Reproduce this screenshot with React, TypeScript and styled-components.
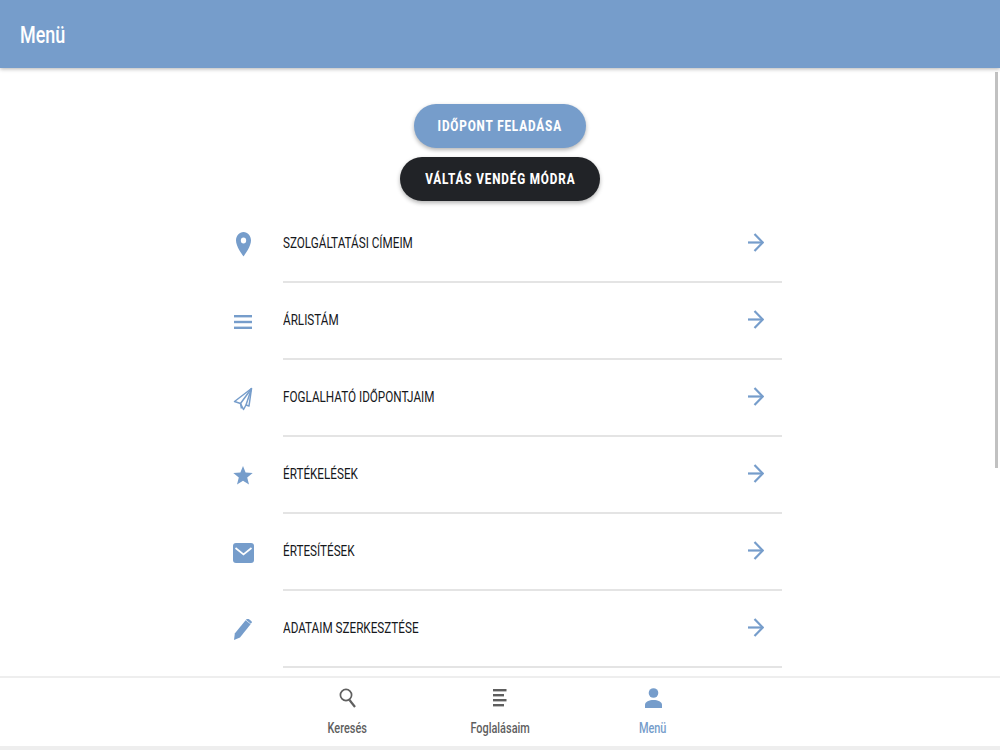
import React from 'react';
import styled, { createGlobalStyle } from 'styled-components';

const BLUE = '#769dcb';
const FONT = 'Roboto, sans-serif';

const GlobalStyle = createGlobalStyle`
  html, body {
    margin: 0;
    height: 100%;
    background: #fff;
    font-family: ${FONT};
  }
`;

// Roboto is wider than the app's font, so labels get squeezed
const Squeezed = styled.span<{ $origin?: string }>`
  display: inline-block;
  white-space: nowrap;
  transform: scaleX(0.78);
  transform-origin: ${(p) => p.$origin || 'center'};
`;

const Page = styled.div`
  position: relative;
  display: flex;
  flex-direction: column;
  width: 1000px;
  height: 750px;
  overflow: hidden;
  background: #fff;
`;

const Header = styled.header`
  flex: none;
  z-index: 2;
  display: flex;
  align-items: center;
  height: 68px;
  padding: 3px 20px 0;
  box-sizing: border-box;
  background: ${BLUE};
  box-shadow: 0 1px 4px rgba(0, 0, 0, 0.3);
`;

const Title = styled.h1`
  margin: 0;
  color: #fff;
  font-size: 23px;
  font-weight: 500;
`;

const Content = styled.main`
  flex: 1;
  min-height: 0;
  overflow: hidden;
  display: flex;
  flex-direction: column;
  align-items: center;
  padding-top: 36px;
`;

const Scrollbar = styled.div`
  position: absolute;
  top: 72px;
  right: 2px;
  width: 3px;
  height: 396px;
  background: #c1c1c1;
`;

const PillButton = styled.button<{ $dark?: boolean; $width: number }>`
  width: ${(p) => p.$width}px;
  height: 44px;
  padding: 0;
  margin-bottom: 9px;
  border: none;
  border-radius: 22px;
  color: #fff;
  background: ${(p) => (p.$dark ? '#212327' : BLUE)};
  box-shadow: 0 2px 4px rgba(0, 0, 0, 0.3);
  font-family: ${FONT};
  font-size: 15px;
  font-weight: 800;
  letter-spacing: 1.1px;
  text-transform: uppercase;
`;

const List = styled.ul`
  list-style: none;
  width: 558px;
  margin: -4px 0 0 6px;
  padding: 0;
`;

const Row = styled.li`
  display: flex;
  align-items: stretch;
  height: 77px;
`;

const IconCell = styled.span`
  flex: none;
  width: 59px;
  display: flex;
  align-items: center;
  justify-content: center;
  padding-right: 21px;
  box-sizing: border-box;
  color: ${BLUE};
`;

const RowBody = styled.span`
  flex: 1;
  display: flex;
  align-items: center;
  justify-content: space-between;
  padding: 0 18px 2px 0;
  border-bottom: 2px solid #e4e4e4;
  box-sizing: border-box;
  color: #16181c;
  font-size: 15px;
  font-weight: 400;
  text-transform: uppercase;
`;

const BottomNav = styled.nav`
  flex: none;
  display: grid;
  grid-template-columns: repeat(3, 153px);
  justify-content: center;
  height: 68px;
  border-top: 2px solid #eeeeee;
  border-bottom: 4px solid #eeeeee;
`;

const NavItem = styled.a<{ $active?: boolean }>`
  display: flex;
  flex-direction: column;
  align-items: center;
  padding-top: 8px;
  color: ${(p) => (p.$active ? BLUE : '#5f5f5f')};
  font-size: 14px;
  font-weight: 500;
`;

const NavIcon = styled.span`
  display: flex;
  align-items: center;
  justify-content: center;
  height: 24px;
  margin-bottom: 10px;
`;

const PlaceIcon = () => (
  <svg width="15" height="25" viewBox="5 2 14 20.5" preserveAspectRatio="none" fill="currentColor">
    <path d="M12 2C8.13 2 5 5.13 5 9c0 5.25 7 13 7 13s7-7.75 7-13c0-3.87-3.13-7-7-7zm0 9.5a2.5 2.5 0 0 1 0-5 2.5 2.5 0 0 1 0 5z" />
  </svg>
);

const MenuIcon = () => (
  <svg width="18" height="14" viewBox="0 0 18 14" fill="currentColor">
    <rect y="0" width="18" height="2.4" />
    <rect y="5.8" width="18" height="2.4" />
    <rect y="11.6" width="18" height="2.4" />
  </svg>
);

const PlaneIcon = () => (
  <svg width="20" height="24" viewBox="0 0 20 24" fill="none" stroke="currentColor" strokeWidth="1.5" strokeLinejoin="round">
    <path d="M18.5 1.5 1.5 14.5l6 2 3 6 2.5-4.5 3 1z" />
    <path d="M18.5 1.5 7.5 16.5l1 5" />
    <path d="M18.5 1.5 13 18" />
  </svg>
);

const StarIcon = () => (
  <svg width="20" height="21" viewBox="0 0 20 19" fill="currentColor">
    <path d="M10 0l2.6 6.6 7.1.5-5.5 4.5 1.8 6.9L10 14.7l-6 3.8 1.8-6.9L.3 7.1l7.1-.5z" />
  </svg>
);

const MailIcon = () => (
  <svg width="21" height="20" viewBox="0 0 21 20">
    <rect width="21" height="20" rx="3" fill="currentColor" />
    <path d="M2.5 5 10.5 11.5l8-6.5" fill="none" stroke="#fff" strokeWidth="1.7" />
  </svg>
);

const PencilIcon = () => (
  <svg width="18" height="21" viewBox="0 0 18 21" fill="currentColor">
    <path d="M0 21l.8-6.6L11.6 1.3l5 3.9L6 18.4z" />
    <path d="M13 0l1-.6 3.6 2.9.2 1.2-1 1.2-5-3.9z" />
  </svg>
);

const ArrowIcon = () => (
  <svg width="16" height="19" viewBox="0 0 16 19" fill="none" stroke={BLUE} strokeWidth="2.2">
    <path d="M0 9.5h14.5" />
    <path d="M6.5 1l8.3 8.5L6.5 18" />
  </svg>
);

const SearchIcon = () => (
  <svg width="17" height="20" viewBox="0 0 17 20" fill="none" stroke="currentColor" strokeWidth="1.7">
    <circle cx="7" cy="7" r="5.6" />
    <path d="M10.5 12l5.5 7" strokeWidth="2.2" />
  </svg>
);

const BookingsIcon = () => (
  <svg width="14" height="18" viewBox="0 0 14 18" fill="currentColor">
    <rect x="0" y="0" width="13.5" height="2.4" />
    <rect x="0" y="5" width="11" height="2.4" />
    <rect x="0" y="10" width="13.5" height="2.4" />
    <rect x="0" y="15" width="11" height="2.4" />
  </svg>
);

const PersonIcon = () => (
  <svg width="17" height="20" viewBox="0 0 17 20" fill="currentColor">
    <circle cx="8.5" cy="5" r="4.8" />
    <path d="M0 20v-3c0-3.4 4.2-5 8.5-5s8.5 1.6 8.5 5v3z" />
  </svg>
);

const menuRows: { label: string; icon: React.ReactNode }[] = [
  { label: 'Szolgáltatási címeim', icon: <PlaceIcon /> },
  { label: 'Árlistám', icon: <MenuIcon /> },
  { label: 'Foglalható időpontjaim', icon: <PlaneIcon /> },
  { label: 'Értékelések', icon: <StarIcon /> },
  { label: 'Értesítések', icon: <MailIcon /> },
  { label: 'Adataim szerkesztése', icon: <PencilIcon /> },
];

const App: React.FC = () => (
  <Page>
    <GlobalStyle />
    <Header>
      <Title><Squeezed $origin="left">Menü</Squeezed></Title>
    </Header>
    <Content>
      <PillButton $width={172}><Squeezed>Időpont feladása</Squeezed></PillButton>
      <PillButton $dark $width={200}><Squeezed>Váltás vendég módra</Squeezed></PillButton>
      <List>
        {menuRows.map((row) => (
          <Row key={row.label}>
            <IconCell>{row.icon}</IconCell>
            <RowBody>
              <Squeezed $origin="left">{row.label}</Squeezed>
              <ArrowIcon />
            </RowBody>
          </Row>
        ))}
      </List>
    </Content>
    <Scrollbar />
    <BottomNav>
      <NavItem>
        <NavIcon><SearchIcon /></NavIcon>
        <Squeezed>Keresés</Squeezed>
      </NavItem>
      <NavItem>
        <NavIcon><BookingsIcon /></NavIcon>
        <Squeezed>Foglalásaim</Squeezed>
      </NavItem>
      <NavItem $active>
        <NavIcon><PersonIcon /></NavIcon>
        <Squeezed>Menü</Squeezed>
      </NavItem>
    </BottomNav>
  </Page>
);

export default App;
